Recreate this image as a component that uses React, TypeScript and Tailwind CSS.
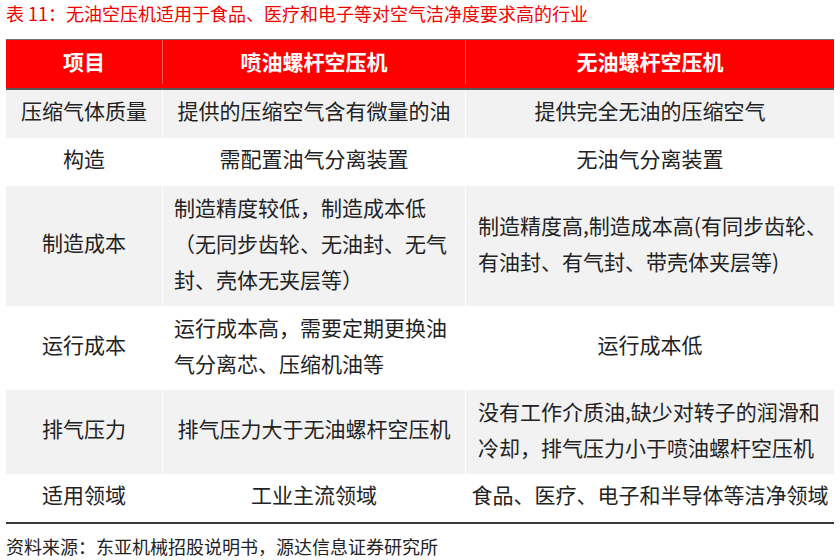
import type { ReactNode } from "react";

const font = { fontFamily: '"Noto Sans CJK SC", "Noto Sans", sans-serif' };

type Row = {
  h: string;
  bg: string;
  name: string;
  a: ReactNode;
  b: ReactNode;
};

function Lines({ lines, pad }: { lines: string[]; pad: string }) {
  return (
    <div className={`w-full text-left leading-[36px] ${pad}`}>
      {lines.map((l) => (
        <div key={l} className="whitespace-nowrap">
          {l}
        </div>
      ))}
    </div>
  );
}

const rows: Row[] = [
  {
    h: "h-[48px]",
    bg: "bg-[#f2f2f2]",
    name: "压缩气体质量",
    a: "提供的压缩空气含有微量的油",
    b: "提供完全无油的压缩空气",
  },
  {
    h: "h-[48px]",
    bg: "bg-white",
    name: "构造",
    a: "需配置油气分离装置",
    b: "无油气分离装置",
  },
  {
    h: "h-[120px]",
    bg: "bg-[#f2f2f2]",
    name: "制造成本",
    a: (
      <Lines
        pad="pl-[11px]"
        lines={["制造精度较低，制造成本低", "（无同步齿轮、无油封、无气", "封、壳体无夹层等）"]}
      />
    ),
    b: (
      <Lines
        pad="pl-[12px]"
        lines={["制造精度高,制造成本高(有同步齿轮、", "有油封、有气封、带壳体夹层等)"]}
      />
    ),
  },
  {
    h: "h-[84px]",
    bg: "bg-white",
    name: "运行成本",
    a: <Lines pad="pl-[11px]" lines={["运行成本高，需要定期更换油", "气分离芯、压缩机油等"]} />,
    b: "运行成本低",
  },
  {
    h: "h-[84px]",
    bg: "bg-[#f2f2f2]",
    name: "排气压力",
    a: "排气压力大于无油螺杆空压机",
    b: (
      <Lines
        pad="pl-[12px]"
        lines={["没有工作介质油,缺少对转子的润滑和", "冷却，排气压力小于喷油螺杆空压机"]}
      />
    ),
  },
  {
    h: "h-[48px]",
    bg: "bg-white",
    name: "适用领域",
    a: "工业主流领域",
    b: "食品、医疗、电子和半导体等洁净领域",
  },
];

export default function App() {
  return (
    <div className="h-[560px] w-[840px] overflow-hidden bg-white px-[6px]" style={font}>
      <div className="pt-[1px] text-[18px] leading-[24px] text-[#f00000]">
        表 11：无油空压机适用于食品、医疗和电子等对空气洁净度要求高的行业
      </div>

      <div className="mt-[14px] w-[828px]">
        <div className="grid h-[51px] grid-cols-[156px_303px_369px] border-t border-b-2 border-t-[#6e6e6e] border-b-[#595959] bg-[#ff0000] pb-[4px] text-[21px] font-bold text-white">
          <div className="flex items-center justify-center">项目</div>
          <div className="flex items-center justify-center border-l border-[#ff5a5a]">喷油螺杆空压机</div>
          <div className="flex items-center justify-center border-l border-[#ff5a5a]">无油螺杆空压机</div>
        </div>

        <div className="border-b-2 border-[#3a3a3a] text-[21px] text-[#222]">
          {rows.map((r) => (
            <div key={r.name} className={`grid grid-cols-[156px_303px_369px] ${r.h} ${r.bg}`}>
              <div className="flex items-center justify-center pb-[6px]">{r.name}</div>
              <div className="flex items-center justify-center border-l border-white pb-[6px]">{r.a}</div>
              <div className="flex items-center justify-center border-l border-white pb-[6px]">{r.b}</div>
            </div>
          ))}
        </div>
      </div>

      <div className="mt-[10px] text-[18px] leading-[24px] text-[#222]">
        资料来源：东亚机械招股说明书，源达信息证券研究所
      </div>
    </div>
  );
}
